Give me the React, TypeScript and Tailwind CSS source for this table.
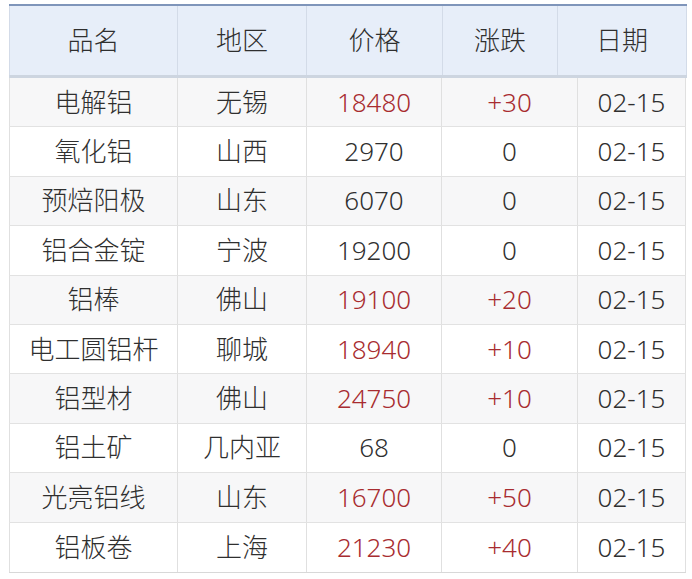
const rows = [
  { name: '电解铝', area: '无锡', price: '18480', change: '+30' },
  { name: '氧化铝', area: '山西', price: '2970', change: '0' },
  { name: '预焙阳极', area: '山东', price: '6070', change: '0' },
  { name: '铝合金锭', area: '宁波', price: '19200', change: '0' },
  { name: '铝棒', area: '佛山', price: '19100', change: '+20' },
  { name: '电工圆铝杆', area: '聊城', price: '18940', change: '+10' },
  { name: '铝型材', area: '佛山', price: '24750', change: '+10' },
  { name: '铝土矿', area: '几内亚', price: '68', change: '0' },
  { name: '光亮铝线', area: '山东', price: '16700', change: '+50' },
  { name: '铝板卷', area: '上海', price: '21230', change: '+40' },
];

export default function App() {
  return (
    <div
      className="h-[579px] w-[692px] bg-white pt-[4px] pl-[9px] text-[26px] font-light text-[#2f2f2f]"
      style={{ fontFamily: '"Noto Sans", "Noto Sans CJK SC", sans-serif' }}
    >
      <div className="w-[678px]">
        <div className="grid h-[74px] grid-cols-[169px_129px_136px_115px_129px] border-t-2 border-b-[3px] border-t-[#7f95ba] border-b-[#cdd5e0] bg-[#e7eef9]">
          {['品名', '地区', '价格', '涨跌', '日期'].map((h, i) => (
            <div
              key={h}
              className={`flex items-center justify-center border-[#d3dbe8] ${i === 0 ? 'border-l' : ''} border-r`}
            >
              {h}
            </div>
          ))}
        </div>
        <div className="w-[677px] border-b border-[#d8d8d8]">
          {rows.map((r, idx) => {
            const up = r.change.startsWith('+');
            return (
              <div
                key={r.name}
                className={`grid h-[49.4px] grid-cols-[169px_129px_135px_136px_108px] border-b border-[#e2e2e2] last:border-b-0 ${idx % 2 === 0 ? 'bg-[#f7f7f8]' : 'bg-white'}`}
              >
                <div className="flex items-center justify-center border-x border-[#e0e0e0]">{r.name}</div>
                <div className="flex items-center justify-center border-r border-[#e0e0e0]">{r.area}</div>
                <div className={`flex items-center justify-center border-r border-[#e0e0e0] ${up ? 'text-[#a82c30]' : ''}`}>{r.price}</div>
                <div className={`flex items-center justify-center border-r border-[#e0e0e0] ${up ? 'text-[#a82c30]' : ''}`}>{r.change}</div>
                <div className="flex items-center justify-center border-r border-[#e0e0e0]">02-15</div>
              </div>
            );
          })}
        </div>
      </div>
    </div>
  );
}
